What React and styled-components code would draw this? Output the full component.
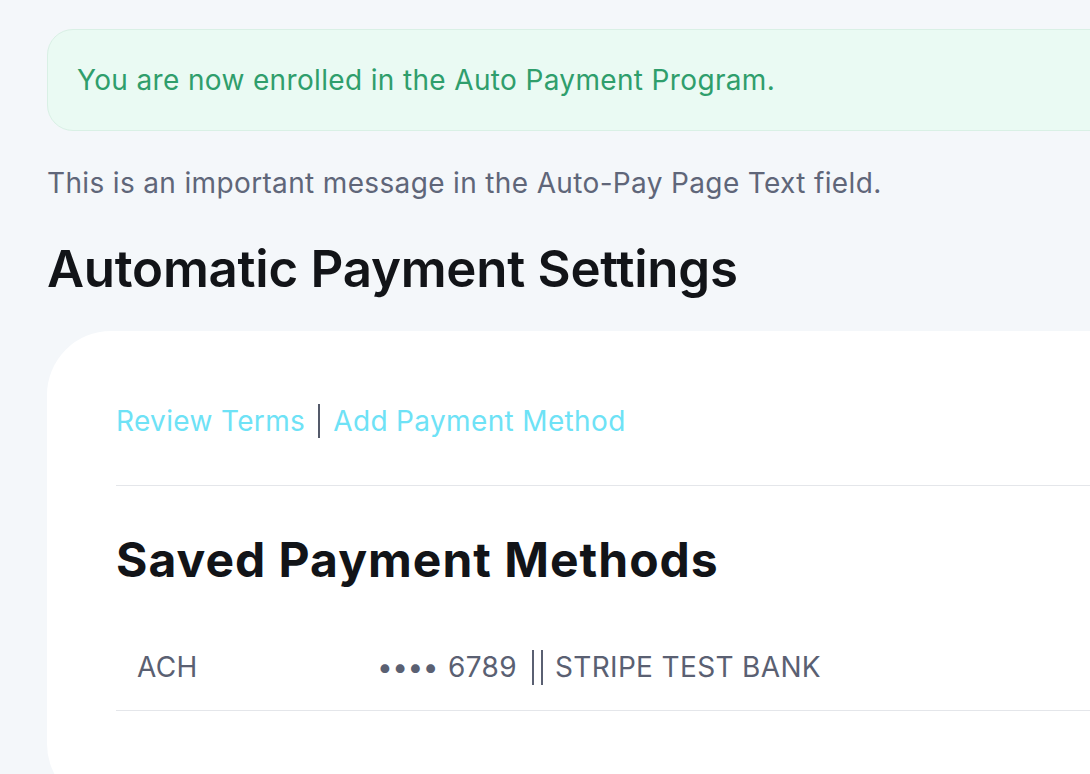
import styled, { createGlobalStyle } from "styled-components";

const GlobalStyle = createGlobalStyle`
    html, body {
        margin: 0;
        padding: 0;
        background: #f4f7fa;
        overflow: hidden;
    }
    body {
        font-family: Inter, "Noto Sans", "Liberation Sans", sans-serif;
        -webkit-font-smoothing: antialiased;
    }
`;

const Page = styled.div`
    box-sizing: border-box;
    width: 1240px;
    padding: 29px 0 0 47px;
`;

const Banner = styled.div`
    box-sizing: border-box;
    border: 1px solid #d9f0e5;
    background: #eafaf3;
    border-radius: 26px;
    padding: 29px 29px;
    color: #2f9e6c;
    font-size: 28px;
    line-height: 42px;
    letter-spacing: 0.35px;
`;

const Message = styled.p`
    margin: 31px 0 0;
    color: #5f6679;
    font-size: 28px;
    line-height: 42px;
    letter-spacing: 0.35px;
`;

const Title = styled.h1`
    margin: 34px 0 0;
    color: #121418;
    font-size: 51px;
    font-weight: 600;
    line-height: 61px;
    letter-spacing: -0.25px;
`;

const Card = styled.section`
    box-sizing: border-box;
    margin-top: 32px;
    background: #ffffff;
    border-radius: 64px;
    padding: 69px 69px 97px;
`;

const Links = styled.div`
    display: flex;
    align-items: center;
    gap: 13px;
    font-size: 28px;
    line-height: 42px;
    letter-spacing: 0.35px;
    padding-bottom: 43px;
    border-bottom: 1px solid #e4e6ea;
`;

const Link = styled.a`
    color: #6ee2f6;
    text-decoration: none;
    cursor: pointer;
`;

const Bar = styled.span`
    width: 2px;
    height: 34px;
    background: #545a6a;
`;

const SectionTitle = styled.h2`
    margin: 46px 0 0;
    color: #121418;
    font-size: 48px;
    font-weight: 700;
    line-height: 56px;
    letter-spacing: 1px;
`;

const Row = styled.div`
    display: grid;
    grid-template-columns: 243px 1fr;
    margin-top: 36px;
    padding: 22px 21px;
    border-bottom: 1px solid #e4e6ea;
    color: #5a6072;
    font-size: 28px;
    line-height: 42px;
    letter-spacing: 0.35px;
`;

const Detail = styled.span`
    display: flex;
    align-items: center;
    margin-left: -3px;
`;

const Dots = styled.span`
    letter-spacing: -0.5px;
    margin-right: 10px;
`;

const Pipes = styled.span`
    display: inline-flex;
    gap: 7px;
    margin: 0 12px 0 15px;
    &::before, &::after {
        content: "";
        width: 2px;
        height: 35px;
        background: #5a6072;
    }
`;

export default function App() {
    return (
        <>
            <GlobalStyle />
            <Page>
                <Banner>You are now enrolled in the Auto Payment Program.</Banner>
                <Message>This is an important message in the Auto-Pay Page Text field.</Message>
                <Title>Automatic Payment Settings</Title>
                <Card>
                    <Links>
                        <Link>Review Terms</Link>
                        <Bar />
                        <Link>Add Payment Method</Link>
                    </Links>
                    <SectionTitle>Saved Payment Methods</SectionTitle>
                    <Row>
                        <span>ACH</span>
                        <Detail>
                            <Dots>••••</Dots>
                            <span>6789</span>
                            <Pipes />
                            <span>STRIPE TEST BANK</span>
                        </Detail>
                    </Row>
                </Card>
            </Page>
        </>
    );
}
